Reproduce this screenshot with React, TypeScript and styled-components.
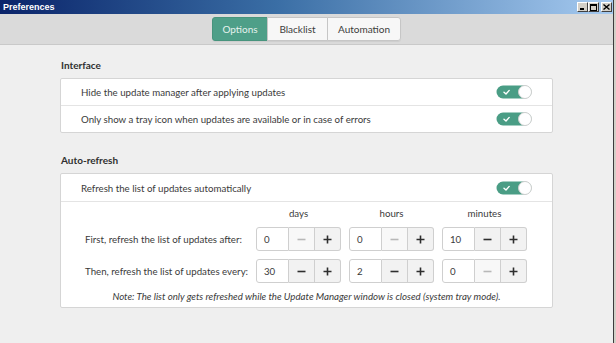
import { FC, Fragment } from 'react';
import styled, { createGlobalStyle } from 'styled-components';

const GlobalStyle = createGlobalStyle`
  html, body {
    margin: 0;
    padding: 0;
  }
  body {
    background: #efefef;
    font-family: Lato, "Noto Sans", sans-serif;
  }
`;

const Window = styled.div`
  width: 616px;
  height: 343px;
  box-sizing: border-box;
  border-right: 2px solid #d4d0c8;
  overflow: hidden;
`;

const Frame = styled.div`
  height: 100%;
  display: flex;
  flex-direction: column;
  background: #efefef;
  border-right: 1px solid #3c3c3c;
`;

const TitleBar = styled.div`
  height: 14px;
  flex: none;
  display: flex;
  align-items: center;
  justify-content: space-between;
  padding: 0 1px 0 3px;
  background: linear-gradient(to right, #0a246a 0%, #3a6ea5 45%, #a6caf0 100%);
`;

const Title = styled.span`
  font: bold 9px 'Liberation Sans', Arial, sans-serif;
  color: #fff;
`;

const WinButtons = styled.div`
  display: flex;
  align-items: center;
`;

const WinButton = styled.div<{ $gap?: boolean }>`
  width: 11px;
  height: 10px;
  box-sizing: border-box;
  margin-left: ${({ $gap }) => ($gap ? '2px' : '0')};
  background: #d4d0c8;
  border: 1px solid;
  border-color: #ffffff #404040 #404040 #ffffff;
  display: flex;
  align-items: center;
  justify-content: center;
`;

const Toolbar = styled.div`
  height: 31px;
  flex: none;
  box-sizing: border-box;
  background: #dadada;
  border-bottom: 1px solid #c9c9c9;
  display: flex;
  align-items: center;
  justify-content: center;
`;

const TabGroup = styled.div`
  display: flex;
  border-radius: 3px;
  box-shadow: 0 1px 1px rgba(0, 0, 0, 0.06);
`;

const Tab = styled.div<{ $active?: boolean; $width: number }>`
  width: ${({ $width }) => $width}px;
  height: 24px;
  box-sizing: border-box;
  display: flex;
  align-items: center;
  justify-content: center;
  font-size: 10px;
  color: ${({ $active }) => ($active ? '#e6f2ee' : '#3c3c3c')};
  background: ${({ $active }) => ($active ? '#4e9f88' : '#f7f7f7')};
  border: 1px solid ${({ $active }) => ($active ? '#47947d' : '#c6c6c6')};
  margin-left: -1px;

  &:first-child {
    margin-left: 0;
    border-radius: 3px 0 0 3px;
  }
  &:last-child {
    border-radius: 0 3px 3px 0;
  }
`;

const Content = styled.div`
  flex: 1;
  padding: 13px 60px 0 60px;
  font-size: 9.7px;
  color: #3a3a3a;
`;

const SectionTitle = styled.div<{ $top?: number }>`
  margin: ${({ $top }) => $top ?? 0}px 0 6px 1px;
  font-size: 10px;
  font-weight: bold;
  line-height: 14px;
  color: #303030;
`;

const Box = styled.div`
  background: #ffffff;
  border: 1px solid #d5d5d5;
  border-radius: 2px;
`;

const Row = styled.div<{ $height: number }>`
  height: ${({ $height }) => $height}px;
  display: flex;
  align-items: center;
  justify-content: space-between;
  padding: 0 19px 0 20px;

  & + & {
    border-top: 1px solid #e4e4e4;
  }
`;

const Grid = styled.div`
  border-top: 1px solid #e4e4e4;
  padding: 4px 0 0 24px;
  display: grid;
  grid-template-columns: 163px 85px 85px 85px;
  column-gap: 8px;
  row-gap: 8px;
  align-items: center;
`;

const ColHead = styled.div`
  text-align: center;
  line-height: 14px;
  margin-bottom: -1px;
`;

const RowLabel = styled.div`
  white-space: nowrap;
`;

const Spin = styled.div`
  display: flex;
  height: 24px;
`;

const SpinEntry = styled.div`
  width: 33px;
  box-sizing: border-box;
  padding-left: 7px;
  display: flex;
  align-items: center;
  background: #ffffff;
  border: 1px solid #cfcfcf;
  border-radius: 3px 0 0 3px;
`;

const SpinButton = styled.div<{ $disabled?: boolean; $last?: boolean }>`
  width: 26px;
  box-sizing: border-box;
  display: flex;
  align-items: center;
  justify-content: center;
  background: ${({ $disabled }) => ($disabled ? '#f8f8f8' : '#f2f2f2')};
  border: 1px solid #cfcfcf;
  border-left: none;
  border-radius: ${({ $last }) => ($last ? '0 3px 3px 0' : '0')};
  color: ${({ $disabled }) => ($disabled ? '#b8b8b8' : '#2e2e2e')};
`;

const Note = styled.div`
  padding: 6px 0 4px;
  text-align: center;
  font-style: italic;
  line-height: 14px;
`;

const Toggle: FC = () => (
  <svg width="37" height="14" viewBox="0 0 37 14">
    <rect x="0.5" y="0.5" width="35" height="13" rx="6.5" fill="#4a9d85" />
    <path d="M8 7.2 L10 9 L13.2 5.4" stroke="#ffffff" strokeWidth="1.4" fill="none" strokeLinecap="round" strokeLinejoin="round" />
    <circle cx="29" cy="7" r="6.5" fill="#ffffff" stroke="#cfcfcf" strokeWidth="1" />
  </svg>
);

const Minus: FC = () => (
  <svg width="9" height="9" viewBox="0 0 9 9">
    <path d="M0.5 4.5 H8.5" stroke="currentColor" strokeWidth="1.6" />
  </svg>
);

const Plus: FC = () => (
  <svg width="9" height="9" viewBox="0 0 9 9">
    <path d="M0.5 4.5 H8.5 M4.5 0.5 V8.5" stroke="currentColor" strokeWidth="1.6" />
  </svg>
);

const SpinField: FC<{ value: number }> = ({ value }) => (
  <Spin>
    <SpinEntry>{value}</SpinEntry>
    <SpinButton $disabled={value === 0}>
      <Minus />
    </SpinButton>
    <SpinButton $last>
      <Plus />
    </SpinButton>
  </Spin>
);

const tabs = [
  { label: 'Options', width: 56, active: true },
  { label: 'Blacklist', width: 61 },
  { label: 'Automation', width: 74 },
];

const refreshRows = [
  { label: 'First, refresh the list of updates after:', values: [0, 0, 10] },
  { label: 'Then, refresh the list of updates every:', values: [30, 2, 0] },
];

const App: FC = () => (
  <>
    <GlobalStyle />
    <Window>
      <Frame>
        <TitleBar>
          <Title>Preferences</Title>
          <WinButtons>
            <WinButton>
              <svg width="7" height="6" viewBox="0 0 7 6">
                <rect x="1" y="4" width="4" height="2" fill="#000" />
              </svg>
            </WinButton>
            <WinButton>
              <svg width="7" height="7" viewBox="0 0 7 7">
                <rect x="0.5" y="0.5" width="6" height="6" fill="none" stroke="#000" />
                <rect x="0" y="0" width="7" height="2" fill="#000" />
              </svg>
            </WinButton>
            <WinButton $gap>
              <svg width="7" height="6" viewBox="0 0 7 6">
                <path d="M0.5 0.5 L6.5 5.5 M6.5 0.5 L0.5 5.5" stroke="#000" strokeWidth="1.4" />
              </svg>
            </WinButton>
          </WinButtons>
        </TitleBar>
        <Toolbar>
          <TabGroup>
            {tabs.map((tab) => (
              <Tab key={tab.label} $active={tab.active} $width={tab.width}>
                {tab.label}
              </Tab>
            ))}
          </TabGroup>
        </Toolbar>
        <Content>
          <SectionTitle>Interface</SectionTitle>
          <Box>
            <Row $height={26}>
              Hide the update manager after applying updates
              <Toggle />
            </Row>
            <Row $height={26}>
              Only show a tray icon when updates are available or in case of errors
              <Toggle />
            </Row>
          </Box>
          <SectionTitle $top={20}>Auto-refresh</SectionTitle>
          <Box>
            <Row $height={27}>
              Refresh the list of updates automatically
              <Toggle />
            </Row>
            <Grid>
              <div />
              <ColHead>days</ColHead>
              <ColHead>hours</ColHead>
              <ColHead>minutes</ColHead>
              {refreshRows.map((row) => (
                <Fragment key={row.label}>
                  <RowLabel>{row.label}</RowLabel>
                  {row.values.map((v, i) => (
                    <SpinField key={i} value={v} />
                  ))}
                </Fragment>
              ))}
            </Grid>
            <Note>
              Note: The list only gets refreshed while the Update Manager window is closed (system tray mode).
            </Note>
          </Box>
        </Content>
      </Frame>
    </Window>
  </>
);

export default App;
